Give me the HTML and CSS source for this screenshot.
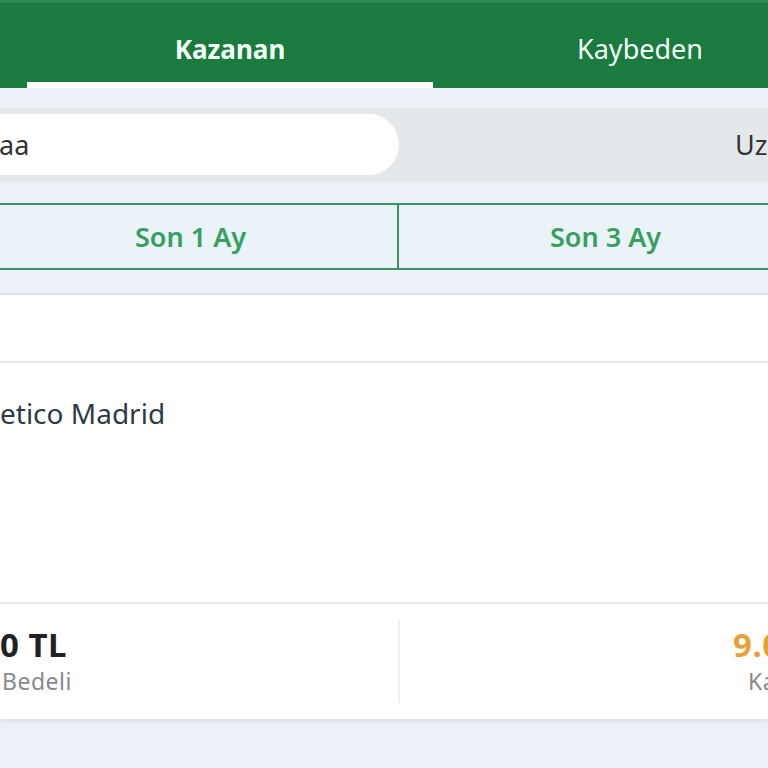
FILE: index.html
```html
<!DOCTYPE html>
<html lang="tr">
<head>
  <meta charset="UTF-8">
  <meta name="viewport" content="width=device-width, initial-scale=1.0">
  <title>Kuponlarım</title>
  <link rel="stylesheet" href="styles.css">
</head>
<body>
  <div class="header">
    <div class="tab active">Kazanan</div>
    <div class="tab">Kaybeden</div>
  </div>

  <div class="segment">
    <div class="seg-item on">aa</div>
    <div class="seg-item">Uz</div>
  </div>

  <div class="periods">
    <div class="period">Son 1 Ay</div>
    <div class="period">Son 3 Ay</div>
  </div>

  <div class="card">
    <div class="card-top"></div>
    <div class="match">etico Madrid</div>
    <div class="stats">
      <div class="stat left">
        <div class="value">0 TL</div>
        <div class="label">Bedeli</div>
      </div>
      <div class="stat right">
        <div class="value win">9.0</div>
        <div class="label">Ka</div>
      </div>
    </div>
  </div>
</body>
</html>
```

FILE: styles.css
```css
body {
  margin: 0;
  background: #ebf1f7;
  font-family: "Noto Sans", "Open Sans", sans-serif;
  color: #2f3a44;
  overflow: hidden;
  height: 768px;
}
.header {
  display: flex;
  gap: 4px;
  padding-left: 27px;
  height: 85px;
  background: #1b7a3e;
  border-top: 3px solid #2b8c4d;
}
.tab {
  flex: 0 0 406px;
  display: flex;
  align-items: center;
  justify-content: center;
  padding: 12px 0 6px;
  box-sizing: border-box;
  color: #f2fff6;
  font-size: 27px;
}
.tab.active {
  font-weight: bold;
  font-size: 26px;
  border-bottom: 6px solid #fff;
  padding-bottom: 0;
}
.segment {
  display: flex;
  margin-top: 20px;
  height: 74px;
  padding: 6px 0 7px;
  box-sizing: border-box;
  background: #e5e8eb;
}
.seg-item {
  display: flex;
  align-items: center;
  font-size: 27px;
  color: #333;
}
.seg-item.on {
  flex: 0 0 439px;
  margin-left: -40px;
  padding-left: 39px;
  box-sizing: border-box;
  background: #fff;
  border-radius: 31px;
}
.seg-item:last-child {
  margin-left: 336px;
}
.periods {
  display: flex;
  margin: 21px 0 0 -16px;
  height: 67px;
  background: #eaf3f8;
  border-top: 2px solid #3a9368;
  border-bottom: 2px solid #3a9368;
  box-sizing: border-box;
}
.period {
  flex: 0 0 413px;
  display: flex;
  align-items: center;
  justify-content: center;
  color: #35a060;
  font-size: 27px;
  font-weight: 600;
}
.period + .period {
  border-left: 2px solid #3a9368;
}
.card {
  margin-top: 23px;
  background: #fff;
  border-top: 2px solid #dfe4ea;
  box-shadow: 0 3px 3px rgba(0,0,0,0.06);
}
.card-top {
  height: 66px;
  border-bottom: 2px solid #e8e9ea;
}
.match {
  height: 241px;
  padding-top: 31px;
  box-sizing: border-box;
  font-size: 28px;
  border-bottom: 2px solid #e8e9ea;
}
.stats {
  display: flex;
  padding: 15px 0 16px;
}
.stat {
  flex-shrink: 0;
  height: 84px;
  display: flex;
  flex-direction: column;
  justify-content: center;
}
.stat.left {
  width: 398px;
  border-right: 2px solid #efefef;
}
.stat.right {
  padding-left: 333px;
}
.value {
  font-size: 33px;
  font-weight: bold;
  color: #222;
  line-height: 40px;
  letter-spacing: 0.5px;
}
.value.win {
  color: #e8a13a;
}
.label {
  font-size: 23px;
  color: #8a8a8a;
  line-height: 32px;
  padding-left: 2px;
  letter-spacing: 0.5px;
}
.stat.right .label {
  padding-left: 15px;
}
```
